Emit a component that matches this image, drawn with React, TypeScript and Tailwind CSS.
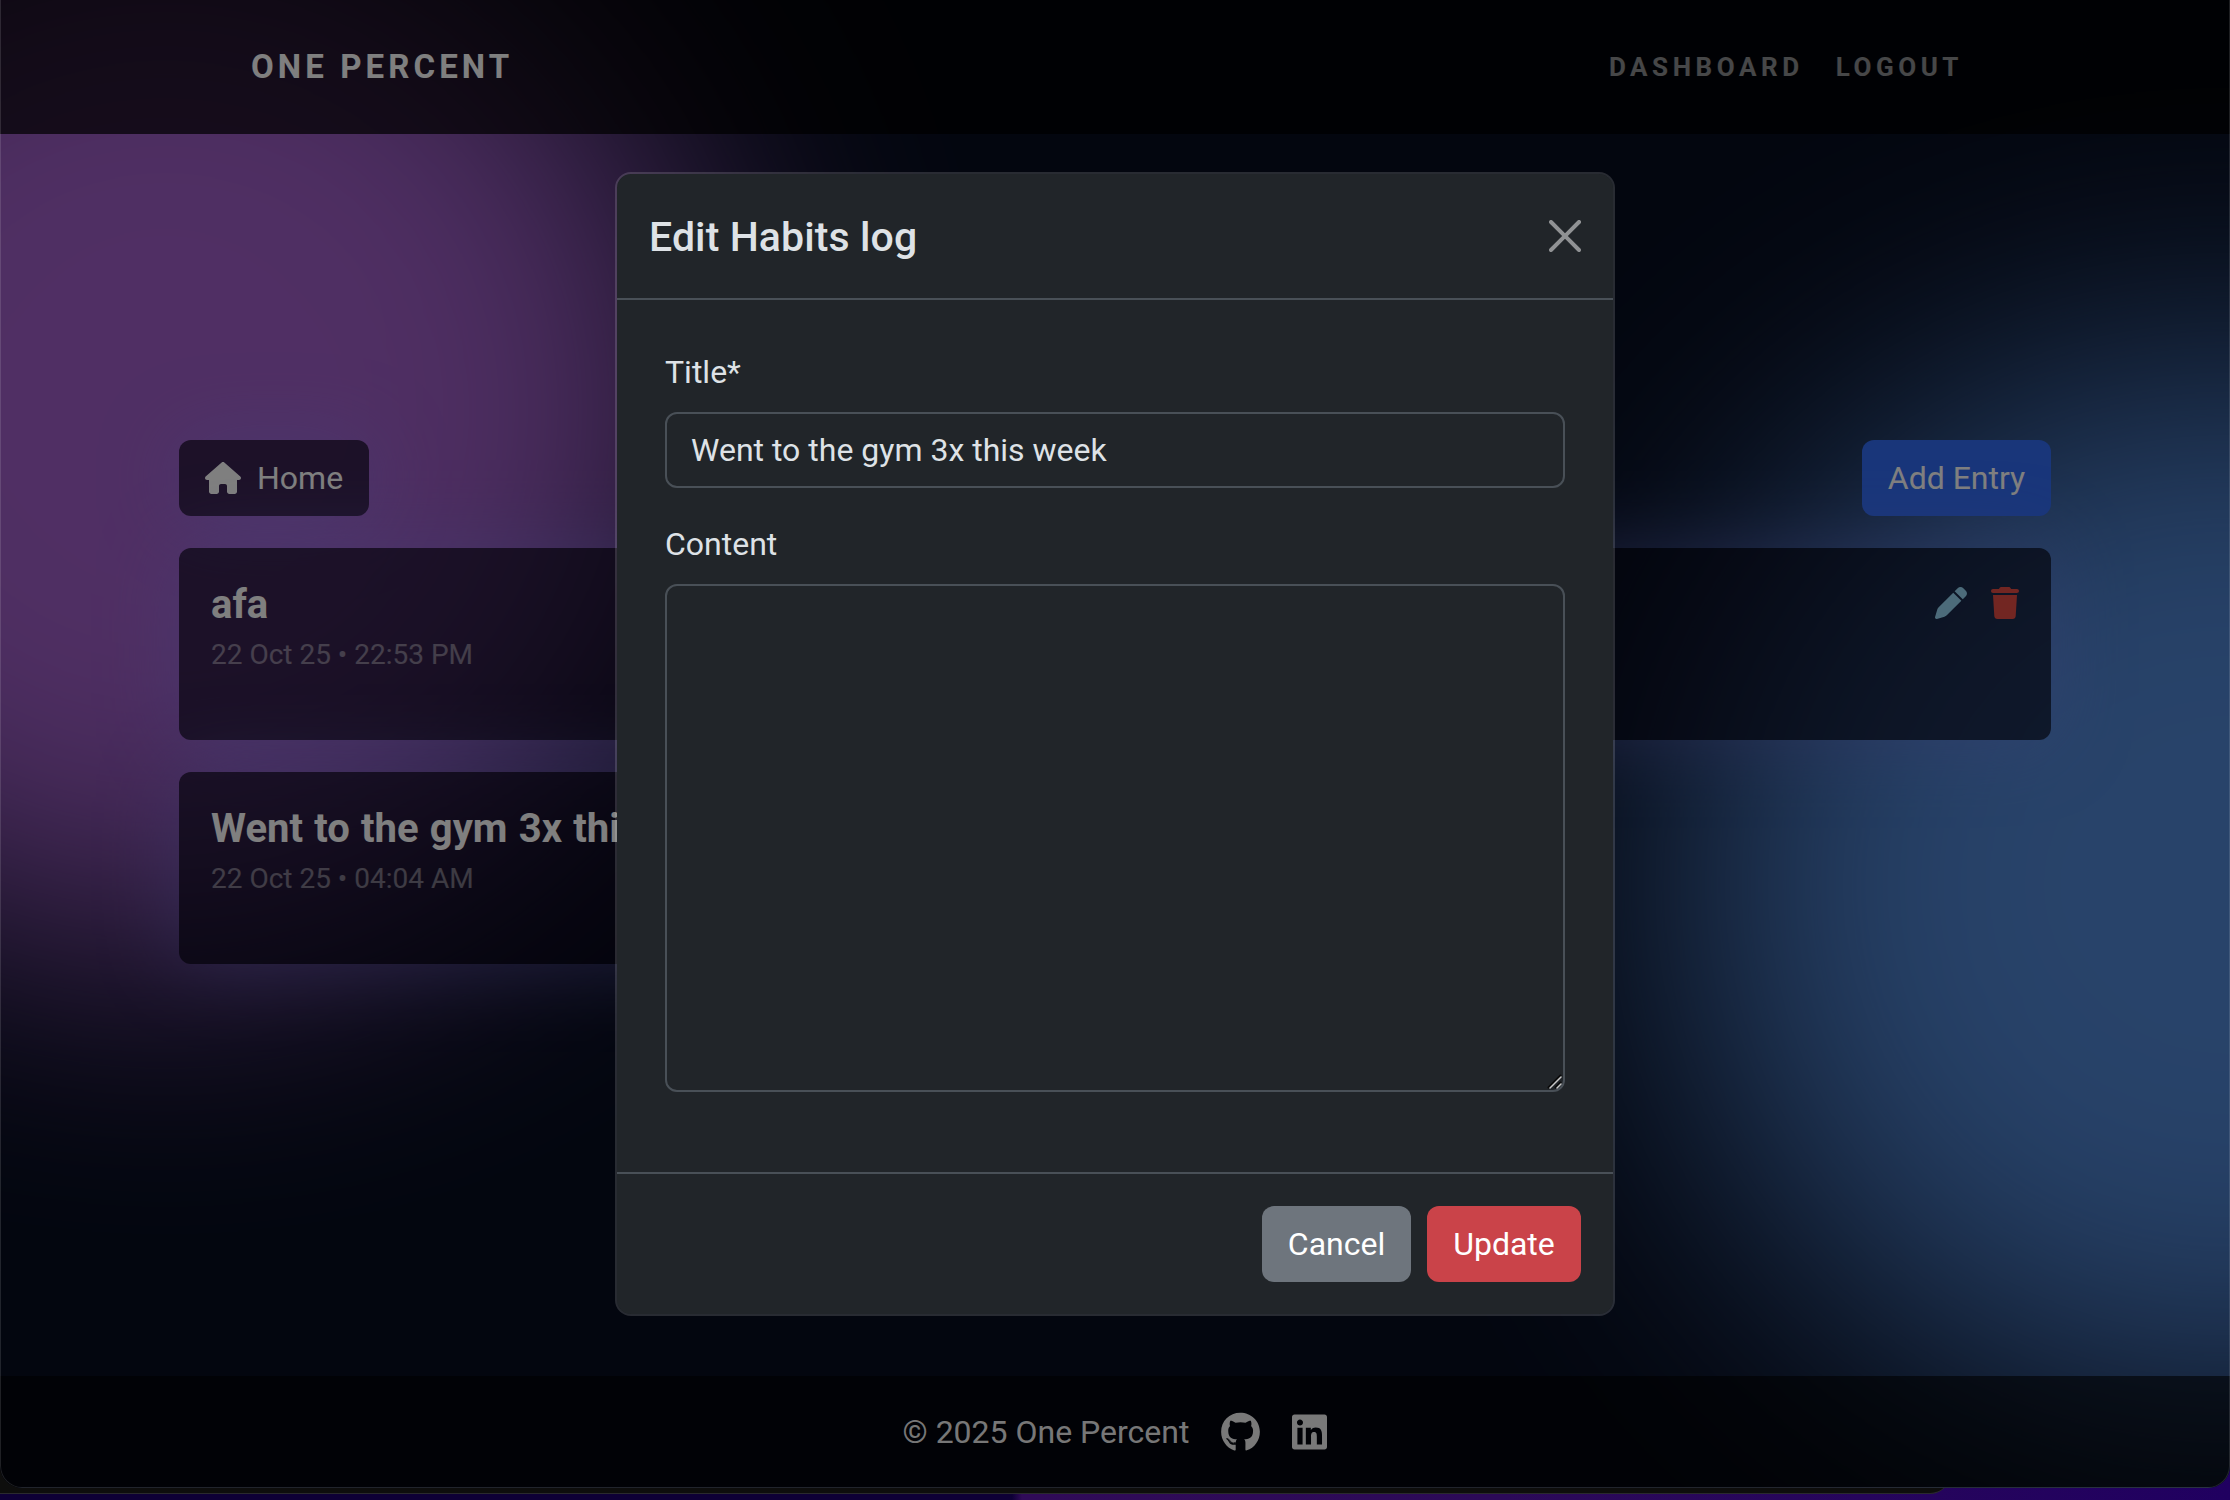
import React from "react";
import { FaGithub, FaHouse, FaLinkedin, FaPen, FaTrash } from "react-icons/fa6";

const glow = "shadow-[0_0_80px_rgba(129,136,250,0.36)]";

function Navbar() {
  return (
    <header className="flex h-[134px] shrink-0 items-center justify-between bg-black/72 pr-[267px] pl-[251px] font-bold uppercase">
      <span className="text-[33px] tracking-[4.1px] text-white">One Percent</span>
      <nav className="flex gap-8 text-[26px] tracking-[4.55px] text-white/55">
        <a>Dashboard</a>
        <a>Logout</a>
      </nav>
    </header>
  );
}

function EntryCard({ title, date, className, actions }: { title: string; date: string; className?: string; actions?: boolean }) {
  return (
    <article className={`flex h-48 justify-between rounded-xl bg-[rgba(4,5,20,0.66)] p-8 ${glow} ${className ?? ""}`}>
      <div>
        <h2 className="text-[40px] leading-[50px] font-bold [word-spacing:1.3px] whitespace-nowrap text-white">{title}</h2>
        <p className="mt-[4px] text-[28px] leading-[42px] text-white/42">{date}</p>
      </div>
      {actions && (
        <div className="flex h-8 gap-6 pt-[7px]">
          <FaPen className="h-8 w-8 shrink-0 text-[#98d6f4]" />
          <FaTrash className="h-8 w-7 shrink-0 text-[#e44c44]" />
        </div>
      )}
    </article>
  );
}

function Footer() {
  return (
    <footer className="flex h-[111px] shrink-0 items-center justify-center gap-8 bg-black/60 text-[32px] leading-[48px] text-white/95">
      <span>© 2025 One Percent</span>
      <FaGithub className="h-10 w-[39px]" />
      <FaLinkedin className="h-10 w-[35px]" />
    </footer>
  );
}

function EditModal() {
  return (
    <section className="flex h-[1144px] w-[1000px] flex-col rounded-2xl border-2 border-white/15 bg-[#212529] bg-clip-padding text-[32px] leading-[48px] text-[#dee2e6]">
      <div className="flex h-[126px] items-center justify-between border-b-2 border-[#495057] px-8">
        <h1 className="pt-px text-[41px] leading-[60px] font-medium tracking-[0.1px]">Edit Habits log</h1>
        <svg viewBox="0 0 16 16" className="h-8 w-8 fill-white/50">
          <path d="M.293.293a1 1 0 0 1 1.414 0L8 6.586 14.293.293a1 1 0 1 1 1.414 1.414L9.414 8l6.293 6.293a1 1 0 0 1-1.414 1.414L8 9.414l-6.293 6.293a1 1 0 0 1-1.414-1.414L6.586 8 .293 1.707a1 1 0 0 1 0-1.414z" />
        </svg>
      </div>
      <div className="flex grow flex-col px-12 pt-12">
        <label>Title*</label>
        <div className="mt-4 flex h-[76px] items-center rounded-xl border-2 border-[#495057] px-6">Went to the gym 3x this week</div>
        <label className="mt-8">Content</label>
        <div className="relative mt-4 h-[508px] rounded-xl border-2 border-[#495057]">
          <svg viewBox="0 0 16 16" className="absolute right-px bottom-px h-4 w-4" fill="none" strokeLinecap="round">
            <path d="M2.5 14.5 14.5 2.5M9.5 14.5 14.5 9.5" stroke="#0a0a0a" strokeWidth="2" />
            <path d="M4 15 15 4M11 15 15 11" stroke="#c8c8c8" strokeWidth="1.5" />
          </svg>
        </div>
      </div>
      <div className="flex h-[142px] items-center justify-end gap-4 border-t-2 border-[#495057] px-8 text-white">
        <button className="h-[76px] w-[149px] rounded-xl bg-[#6e757d]">Cancel</button>
        <button className="h-[76px] w-[154px] rounded-xl bg-[#ca4349]">Update</button>
      </div>
    </section>
  );
}

export default function App() {
  return (
    <div className="relative h-[1500px] w-[2230px] overflow-hidden bg-[linear-gradient(90deg,#0e0036_0,#0e0036_1012px,#300b58_1022px,#2c0a58_1500px,#200060_2230px)] font-[Roboto,sans-serif]">
      <div className="absolute top-0 -left-5 h-[1494px] w-[1970px] rounded-b-[20px] border-b border-[#2a2a2e] bg-[#0e0e0d]" />
      <div className="relative isolate h-[1488px] w-[2230px] overflow-hidden rounded-b-[22px] bg-[#070d1f]">
        <div className="absolute -top-[125px] -left-[370px] -z-10 h-[1070px] w-[1070px] rounded-full bg-[#a05fc8] blur-[140px]" />
        <div className="absolute top-[355px] left-[1685px] -z-10 h-[1060px] w-[1090px] rounded-full bg-[#5086d4] blur-[146px]" />

        <div className="flex h-[1487px] flex-col">
          <Navbar />
          <main className="flex grow flex-col gap-8 px-[179px] pt-[306px]">
            <div className="flex items-center justify-between text-[32px] text-white">
              <button className={`flex h-[76px] w-[190px] items-center gap-4 rounded-xl bg-[rgba(4,5,20,0.66)] pl-[26px] ${glow}`}>
                <FaHouse className="h-8 w-9" />
                Home
              </button>
              <button className="h-[76px] w-[189px] rounded-xl bg-[#326cf4]">Add Entry</button>
            </div>
            <div className="grid grid-cols-2 gap-8">
              <EntryCard title="afa" date="22 Oct 25 • 22:53 PM" className="col-span-2" actions />
              <EntryCard title="Went to the gym 3x this week" date="22 Oct 25 • 04:04 AM" />
            </div>
          </main>
          <Footer />
        </div>

        <div className="absolute inset-0 flex justify-center bg-black/50 pt-[172px]">
          <EditModal />
        </div>
        <div className="absolute inset-0 rounded-b-[22px] border border-t-0 border-white/12" />
      </div>
    </div>
  );
}
